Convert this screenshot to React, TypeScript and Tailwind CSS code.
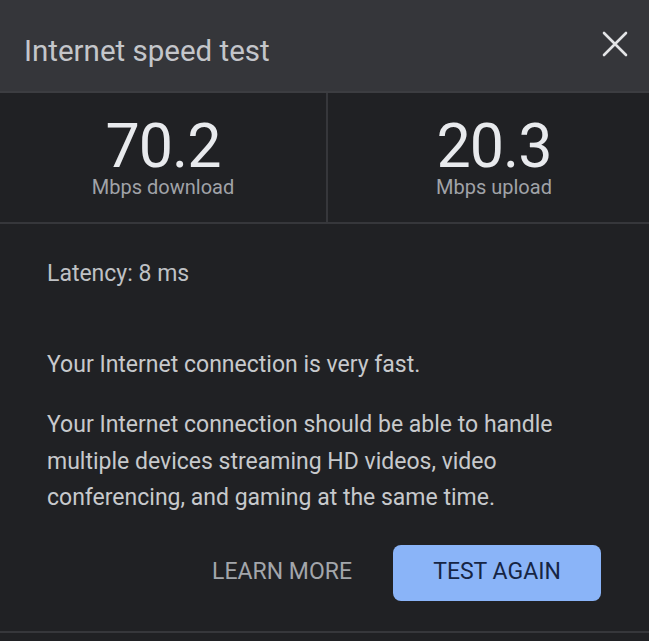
const stats = [
  { value: '70.2', label: 'Mbps download' },
  { value: '20.3', label: 'Mbps upload' },
];

function CloseIcon() {
  return (
    <svg width="26" height="26" viewBox="0 0 26 26" className="text-[#e3e4e6] -mt-[3px]">
      <path d="M2 2L24 24M24 2L2 24" stroke="currentColor" strokeWidth="2.6" strokeLinecap="round" />
    </svg>
  );
}

export default function App() {
  return (
    <div className="w-[649px] h-[641px] bg-[#202124] font-[Roboto,sans-serif] flex flex-col overflow-hidden">
      {/* Header */}
      <div className="h-[93px] bg-[#35363a] border-b-2 border-[#3c3d41] flex items-center justify-between pl-[24px] pr-[21px]">
        <h1 className="mt-[10px] text-[29.5px] leading-[34px] text-[#c4c6ca]">Internet speed test</h1>
        <CloseIcon />
      </div>

      {/* Results */}
      <div className="h-[131px] grid grid-cols-[328px_1fr] border-b-2 border-[#36373b]">
        {stats.map((s, i) => (
          <div
            key={s.label}
            className={
              'flex flex-col items-center pt-[23px] ' +
              (i === 0 ? 'border-r-2 border-[#36373b]' : 'pl-[11px]')
            }
          >
            <div className="text-[61px] leading-[60px] tracking-[-1px] text-[#e8eaed]">{s.value}</div>
            <div className="text-[20px] leading-[22px] text-[#a0a3a8]">{s.label}</div>
          </div>
        ))}
      </div>

      {/* Details */}
      <div className="h-[409px] border-b-2 border-[#36373b] px-[47px] pt-[36px] flex flex-col">
        <p className="text-[23px] leading-[28px] text-[#bfc1c5]">Latency: 8 ms</p>
        <p className="mt-[59px] text-[23px] leading-[36px] text-[#c7c9cc]">
          Your Internet connection is very fast.
        </p>
        <p className="mt-[24px] text-[23px] leading-[36.5px] text-[#c7c9cc]">
          Your Internet connection should be able to handle multiple devices streaming HD videos, video
          conferencing, and gaming at the same time.
        </p>
        <div className="mt-[28px] flex items-center justify-end gap-[41px] mr-[1px]">
          <button className="text-[23px] text-[#a3a6ab] uppercase">Learn more</button>
          <button className="w-[208px] h-[56px] rounded-[8px] bg-[#8ab4f8] text-[23px] text-[#162544] uppercase">
            Test again
          </button>
        </div>
      </div>
    </div>
  );
}
